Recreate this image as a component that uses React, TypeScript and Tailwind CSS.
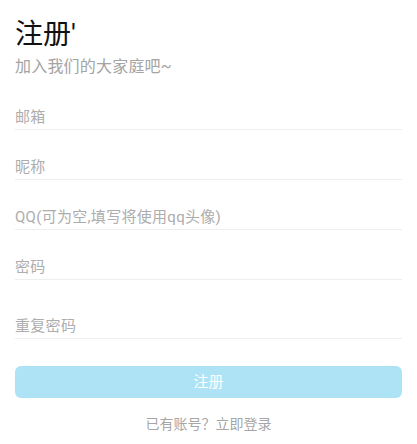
const fields = [
  { label: '邮箱', type: 'text' },
  { label: '昵称', type: 'text' },
  { label: 'QQ(可为空,填写将使用qq头像)', type: 'text' },
  { label: '密码', type: 'password' },
];

export default function App() {
  return (
    <div
      className="min-h-[444px] bg-white px-[15px]"
      style={{ fontFamily: 'Roboto, "Noto Sans CJK SC", sans-serif' }}
    >
      {/* Header */}
      <h1 className="pt-[15px] text-[28px] leading-[40px] font-normal text-[#111]">注册'</h1>
      <p className="text-[16px] leading-[24px] tracking-[0.2px] text-[#a4a4a4]">加入我们的大家庭吧~</p>

      {/* Form */}
      <form className="mt-[25px] flex flex-col">
        {fields.map((f, i) => (
          <input
            key={i}
            type={f.type}
            placeholder={f.label}
            className={`h-[26px] w-full border-b border-[#eeeeee] bg-transparent text-[15px] tracking-[0.3px] text-[#333] outline-none placeholder:text-[#adadad] ${i > 0 ? 'mt-[24px]' : ''}`}
          />
        ))}
        <input
          type="password"
          placeholder="重复密码"
          className="mt-[33px] h-[26px] w-full border-b border-[#eeeeee] bg-transparent text-[15px] tracking-[0.3px] text-[#333] outline-none placeholder:text-[#adadad]"
        />

        <button
          type="button"
          className="mt-[27px] h-[32px] w-full rounded-[6px] bg-[#aee3f5] text-[15px] text-white"
        >
          注册
        </button>
      </form>

      <p className="mt-[16px] text-center text-[14px] leading-[20px] text-[#a6a6a6]">已有账号？立即登录</p>
    </div>
  );
}
